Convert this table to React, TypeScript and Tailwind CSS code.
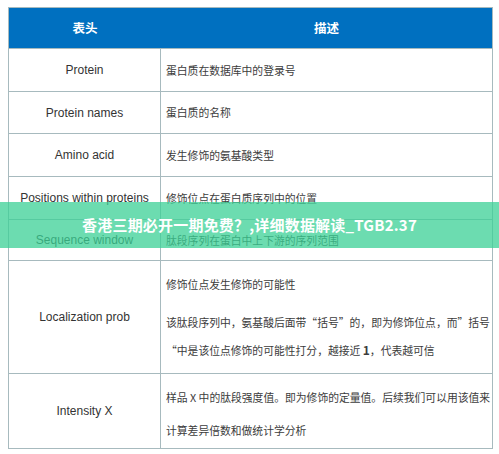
import React from "react";

const border = "border-[#a7babe]";

function Row({
  h,
  left,
  children,
}: {
  h: string;
  left: string;
  children: React.ReactNode;
}) {
  return (
    <div className={`grid grid-cols-[152px_1fr] border-t ${border} ${h}`}>
      <div
        className={`flex items-center justify-center border-r ${border} text-[12px] text-[#333] font-['Liberation_Sans','Noto_Sans_CJK_SC',sans-serif] whitespace-nowrap`}
      >
        {left}
      </div>
      <div className="flex flex-col justify-center pl-[5px] text-[10.8px] text-[#3c3c3c] font-['Noto_Sans_CJK_SC',sans-serif] whitespace-nowrap">
        {children}
      </div>
    </div>
  );
}

export default function App() {
  return (
    <div className="relative w-[499px] h-[454px] bg-white overflow-hidden">
      <div className="pt-[7px] pl-[8px]">
        <div className={`w-[485px] border ${border}`}>
          <div className="grid grid-cols-[152px_1fr] h-[40px] bg-[#0070c0] items-center text-white font-bold text-[12.5px] font-['Noto_Sans_CJK_SC',sans-serif]">
            <div className="text-center">表头</div>
            <div className="text-center">描述</div>
          </div>
          <Row h="h-[43px]" left="Protein">
            蛋白质在数据库中的登录号
          </Row>
          <Row h="h-[42px]" left="Protein names">
            蛋白质的名称
          </Row>
          <Row h="h-[43px]" left="Amino acid">
            发生修饰的氨基酸类型
          </Row>
          <Row h="h-[43px]" left="Positions within proteins">
            修饰位点在蛋白质序列中的位置
          </Row>
          <Row h="h-[41px]" left="Sequence window">
            肽段序列在蛋白中上下游的序列范围
          </Row>
          <div className={`grid grid-cols-[152px_1fr] border-t ${border} h-[113px]`}>
            <div
              className={`flex items-center justify-center border-r ${border} text-[12px] text-[#333] font-['Liberation_Sans','Noto_Sans_CJK_SC',sans-serif] whitespace-nowrap`}
            >
              Localization prob
            </div>
            <div className="flex flex-col pt-[9px] pl-[5px] text-[10.8px] text-[#3c3c3c] font-['Noto_Sans_CJK_SC',sans-serif] whitespace-nowrap">
              <p className="leading-[28px] mb-[10px]">修饰位点发生修饰的可能性</p>
              <p className="leading-[28px]">
                该肽段序列中，氨基酸后面带“括号”的，即为修饰位点，而”括号
              </p>
              <p className="leading-[28px]">
                “中是该位点修饰的可能性打分，越接近 <b className="font-bold text-[12px]">1</b>，代表越可信
              </p>
            </div>
          </div>
          <div className={`grid grid-cols-[152px_1fr] border-t ${border} h-[75px]`}>
            <div
              className={`flex items-center justify-center border-r ${border} text-[12px] text-[#333] font-['Liberation_Sans','Noto_Sans_CJK_SC',sans-serif] whitespace-nowrap`}
            >
              Intensity X
            </div>
            <div className="flex flex-col pt-[7px] pl-[5px] text-[10.8px] text-[#3c3c3c] font-['Noto_Sans_CJK_SC',sans-serif] whitespace-nowrap">
              <p className="leading-[33px]">
                样品 X 中的肽段强度值。即为修饰的定量值。后续我们可以用该值来
              </p>
              <p className="leading-[33px]">计算差异倍数和做统计学分析</p>
            </div>
          </div>
        </div>
      </div>
      <div className="absolute left-0 right-0 top-[202px] h-[46px] bg-[#3bd096]/75 flex items-center justify-center">
        <span className="text-white font-bold text-[15px] font-['Noto_Sans_CJK_SC',sans-serif] tracking-[0.2px] whitespace-nowrap">
          香港三期必开一期免费？,详细数据解读_TGB2.37
        </span>
      </div>
    </div>
  );
}
